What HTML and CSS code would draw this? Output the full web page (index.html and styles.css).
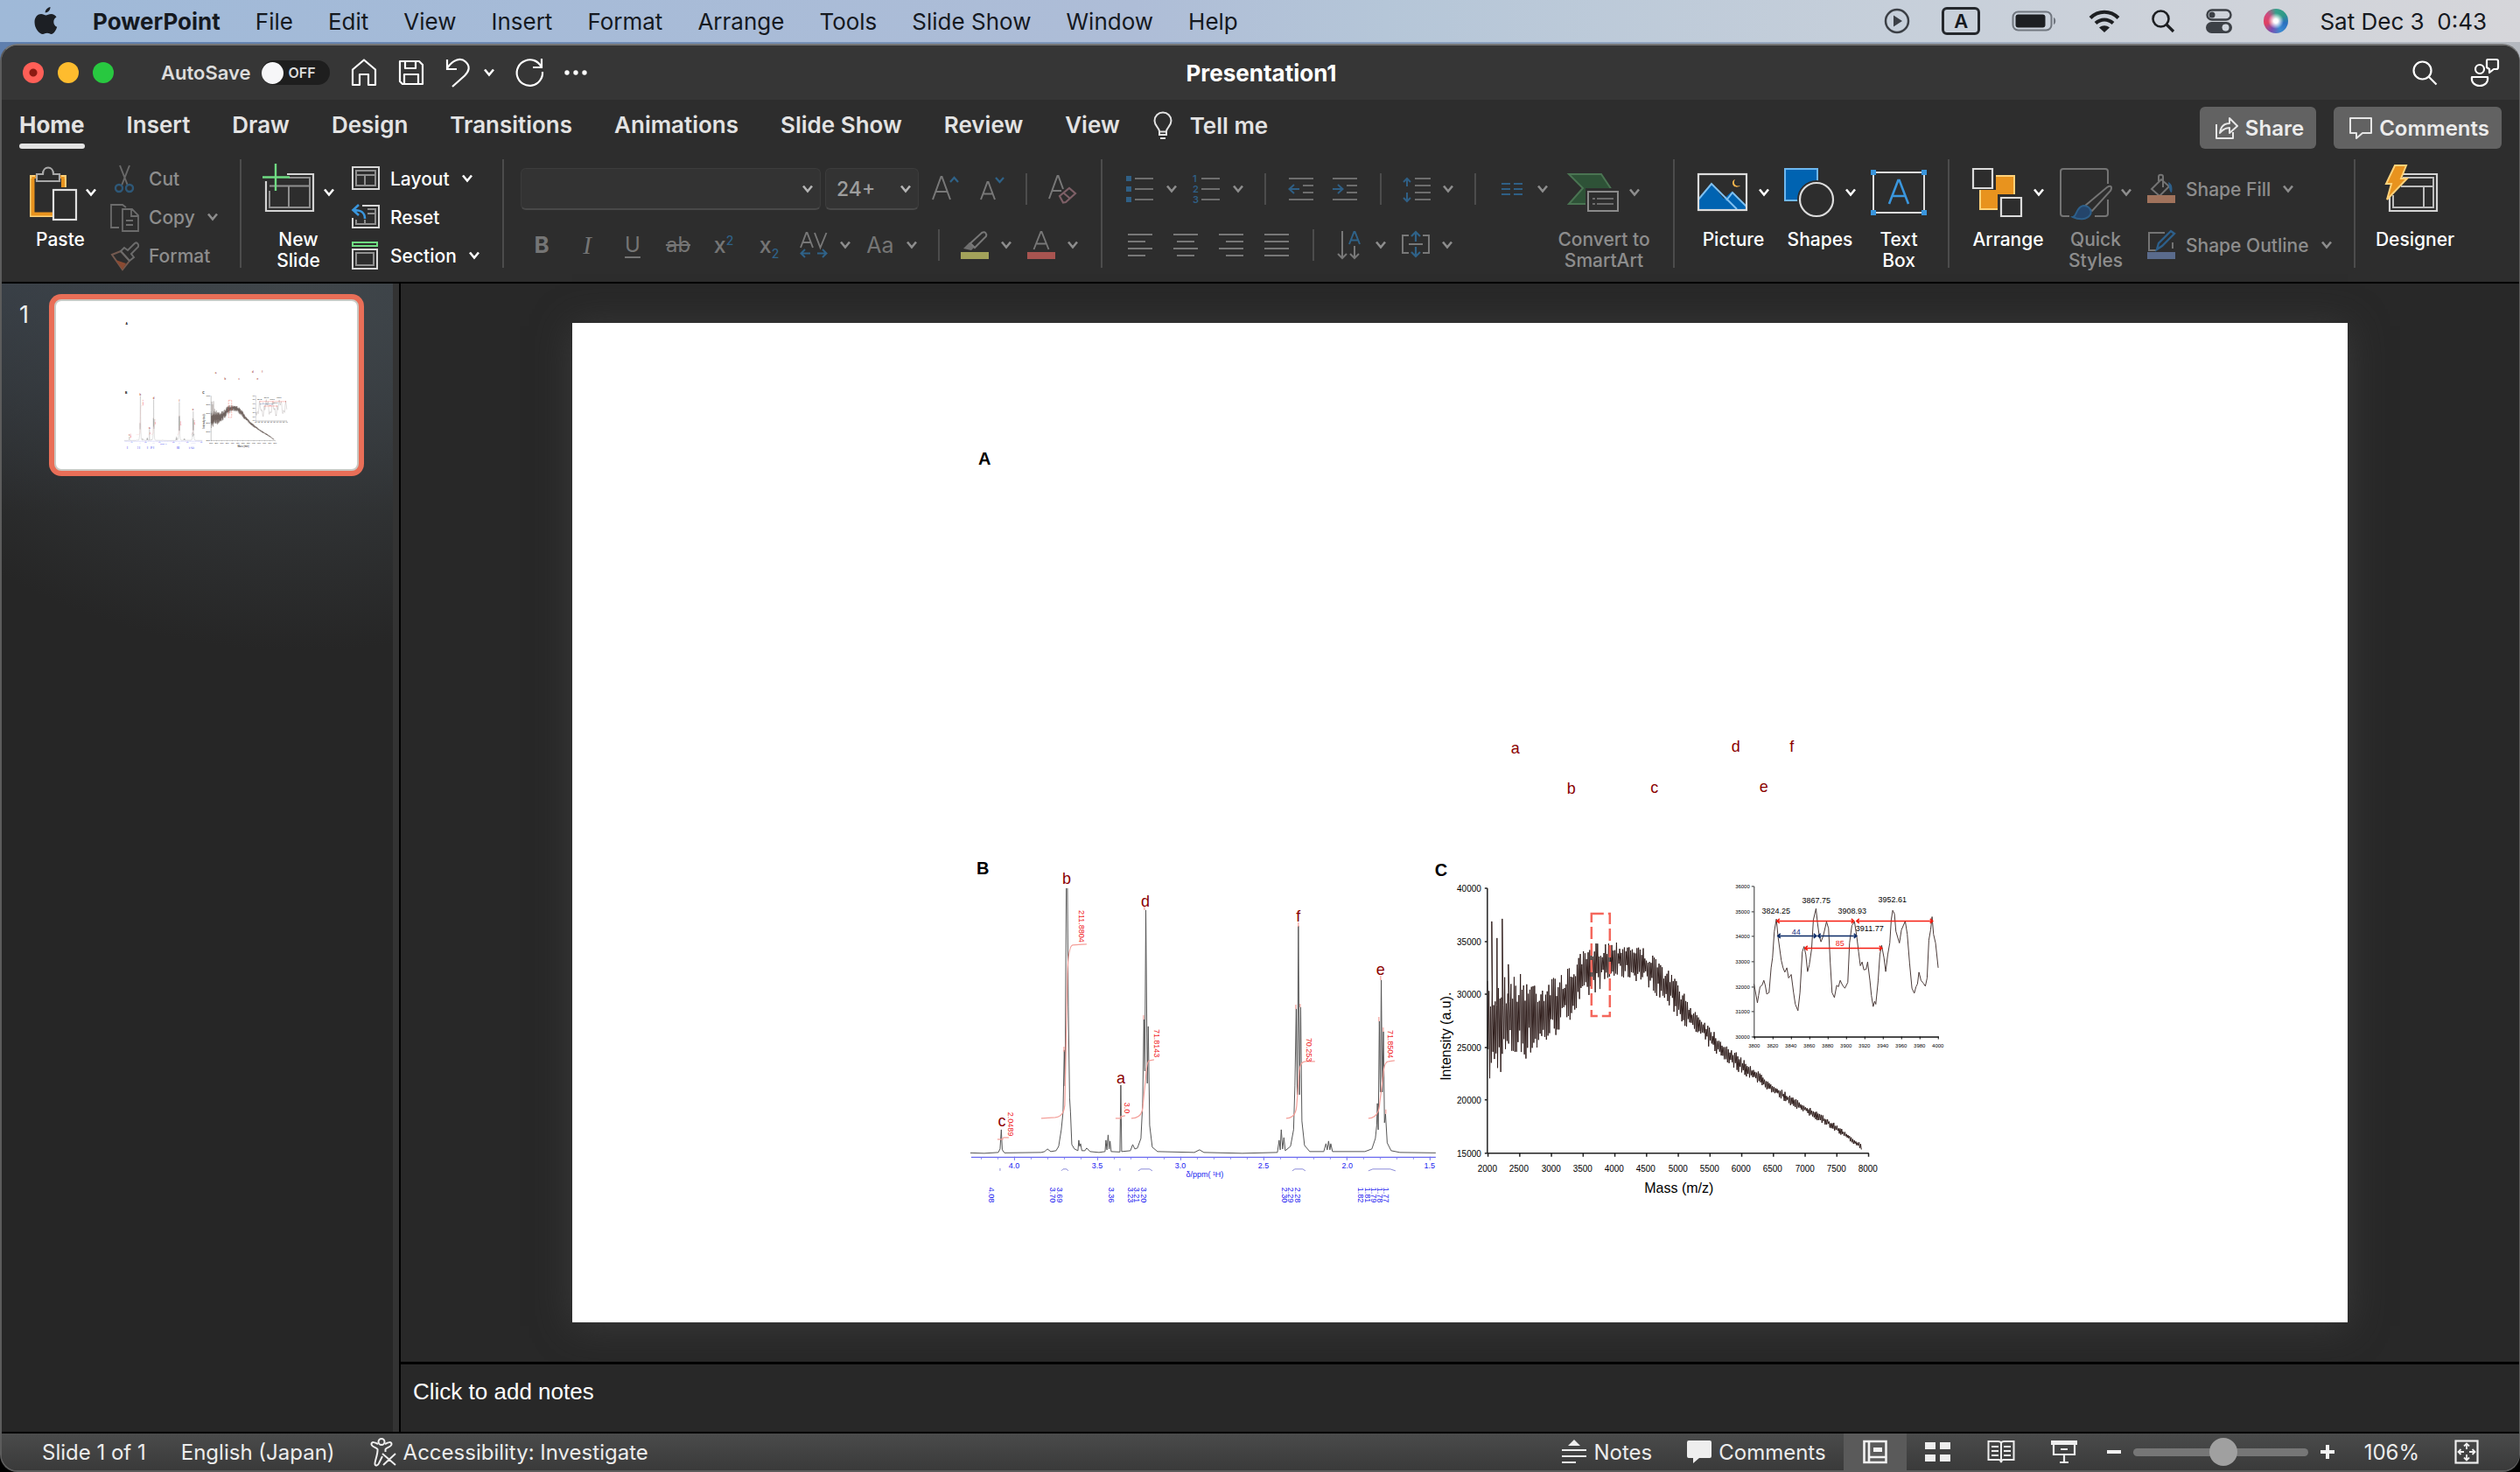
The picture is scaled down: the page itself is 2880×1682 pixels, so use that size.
FILE: index.html
```html
<!DOCTYPE html>
<html lang="en">
<head>
<meta charset="utf-8">
<title>Presentation1</title>
<link rel="stylesheet" href="styles.css">
</head>
<body>
<svg class="defs" aria-hidden="true">
  <symbol id="chev" viewBox="0 0 12 10"><path d="M1 1.5 6 7.5 11 1.5" fill="none" stroke="currentColor" stroke-width="2.6"/></symbol>
</svg>

<header class="menubar">
  <nav class="menus">
    <a href="#" aria-label="Apple"><svg width="28" height="34" viewBox="0 0 28 34"><path fill="#1c1f24" d="M19.500 1c.2 3-2.600 6.500-5.800 6.500C13.400 4.500 16.500 1.300 19.500 1zM26.500 12.500c-2 1.300-3.200 3-3.200 5.400 0 2.700 1.500 4.900 3.900 5.900-1 3.200-3.600 8.200-6.400 8.200-2 0-2.600-1.200-4.900-1.200-2.400 0-3.100 1.200-5 1.200C6.800 32 1.500 25.500 1.500 18.300c0-6.200 3.900-9.300 7.500-9.300 2.300 0 4.100 1.500 5.500 1.500 1.300 0 3.400-1.600 6.100-1.600 2.300 0 4.600 1.200 5.900 3.600z"/></svg></a>
    <a href="#" class="app">PowerPoint</a>
    <a href="#">File</a><a href="#">Edit</a><a href="#">View</a><a href="#">Insert</a><a href="#">Format</a><a href="#">Arrange</a><a href="#">Tools</a><a href="#">Slide Show</a><a href="#">Window</a><a href="#">Help</a>
  </nav>
  <div class="extras">
    <svg width="30" height="30" viewBox="0 0 30 30"><circle cx="15" cy="15" r="13" fill="none" stroke="#3c4046" stroke-width="2.500"/><path d="M11 8.500v13L21 15z" fill="#3c4046"/></svg>
    <span class="input-source">A</span>
    <svg width="52" height="24" viewBox="0 0 52 24"><rect x="1.500" y="1.500" width="44" height="21" rx="6" fill="none" stroke="#70767e" stroke-width="2"/><rect x="4.500" y="4.500" width="34" height="15" rx="3" fill="#1d1f22"/><path d="M48 8v8c3-1 3-7 0-8z" fill="#70767e"/></svg>
    <svg width="36" height="26" viewBox="0 0 36 26"><path d="M2 9.500c9-9 23-9 32 0M8 15.500c6-5.500 14-5.500 20 0" fill="none" stroke="#1d1f22" stroke-width="4"/><path d="M12 20.500c4-3 8-3 12 0L18 26z" fill="#1d1f22"/></svg>
    <svg width="26" height="26" viewBox="0 0 26 26"><circle cx="10.500" cy="10.500" r="9" fill="none" stroke="#1d1f22" stroke-width="2.600"/><path d="m17 17 8 8" stroke="#1d1f22" stroke-width="3.200"/></svg>
    <svg width="30" height="28" viewBox="0 0 30 28"><rect x="1.500" y="1.500" width="27" height="11" rx="5.500" fill="none" stroke="#3c4046" stroke-width="2.400"/><circle cx="7" cy="7" r="3.500" fill="#3c4046"/><rect y="15" width="30" height="13" rx="6.500" fill="#3c4046"/><circle cx="22.500" cy="21.500" r="4" fill="#cfd5dd"/></svg>
    <span class="siri"></span>
    <time>Sat Dec 3&nbsp; 0:43</time>
  </div>
</header>

<main class="window">
  <div class="titlebar">
    <div class="quick">
      <div class="lights"><button class="light red" aria-label="Close"></button><button class="light yellow" aria-label="Minimise"></button><button class="light green" aria-label="Zoom"></button></div>
      <label class="autosave">AutoSave <span class="toggle"><input type="checkbox" role="switch"><span>OFF</span></span></label>
      <div class="quick-tools">
        <button aria-label="Home"><svg width="30" height="32" viewBox="0 0 30 32"><path d="M2 12.500 15 1.500l13 11V30h-8V18h-10v12H2z" fill="none" stroke="#fff" stroke-width="2.200" stroke-linejoin="round"/></svg></button>
        <button aria-label="Save"><svg width="30" height="32" viewBox="0 0 30 32"><path d="M2 3h22l4 4v22H5l-3-3zM8 3v8h12V3M7 29V18h16v11" fill="none" stroke="#fff" stroke-width="2.200" stroke-linejoin="round"/></svg></button>
        <button class="undo" aria-label="Undo"><svg width="28" height="34" viewBox="0 0 28 34"><path d="M2 2v11h11M2 12C8 3 17-1 23 4.500s4 11-1 16L8 33" fill="none" stroke="#fff" stroke-width="2.200"/></svg><svg class="chev"><use href="#chev"/></svg></button>
        <button aria-label="Redo"><svg width="32" height="34" viewBox="0 0 32 34"><path d="M30 1v10H20M30 11C26 3 18 .500 11 3.500A14.700 14.700 0 1 0 31 16" fill="none" stroke="#fff" stroke-width="2.200"/></svg></button>
        <button aria-label="More"><svg width="26" height="6" viewBox="0 0 26 6"><circle cx="3" cy="3" r="2.700" fill="#fff"/><circle cx="13" cy="3" r="2.700" fill="#fff"/><circle cx="23" cy="3" r="2.700" fill="#fff"/></svg></button>
      </div>
    </div>
    <h1>Presentation1</h1>
    <div class="title-right">
      <button aria-label="Search"><svg width="28" height="28" viewBox="0 0 28 28"><circle cx="11.500" cy="11.500" r="10" fill="none" stroke="#fff" stroke-width="2.200"/><path d="m18.500 18.500 9 9" stroke="#fff" stroke-width="2.200"/></svg></button>
      <button aria-label="Presence"><svg width="34" height="34" viewBox="0 0 34 34"><g fill="none" stroke="#fff" stroke-width="2.200" stroke-linejoin="round"><circle cx="11" cy="13" r="5"/><path d="M2 22h18c1 6-3 10-9 10S1 28 2 22zM20 2h10q2 0 2 2v7q0 2-2 2h-3l-5 4v-4l-3-2V4q0-2 1-2z"/></g></svg></button>
    </div>
  </div>

  <div class="tabbar">
    <nav class="tabs">
      <button class="active">Home</button><button>Insert</button><button>Draw</button><button>Design</button><button>Transitions</button><button>Animations</button><button>Slide Show</button><button>Review</button><button>View</button>
      <button class="tellme"><svg width="22" height="32" viewBox="0 0 22 32"><path d="M7 22c0-4-5.500-6-5.500-12a9.500 9.500 0 0 1 19 0c0 6-5.500 8-5.500 12v4H7zM7 22.500h8M8 30h6" fill="none" stroke="#e3e3e3" stroke-width="2"/></svg>Tell me</button>
    </nav>
    <div class="actions">
      <button><svg width="26" height="26" viewBox="0 0 26 26"><path d="M1 9v16h19v-7M5 19C6 11 10 8 16 8V2l9 9-9 8v-6c-5 0-8 2-11 6z" fill="none" stroke="#e6e6e6" stroke-width="2" stroke-linejoin="round"/></svg>Share</button>
      <button><svg width="26" height="26" viewBox="0 0 26 26"><path d="M1 2h24v17H15l-7 6v-6H1z" fill="none" stroke="#e6e6e6" stroke-width="2" stroke-linejoin="round"/></svg>Comments</button>
    </div>
  </div>

  <div class="ribbon">
    <section class="group clipboard">
      <button class="big"><span><svg width="58" height="64" viewBox="0 0 58 64"><path d="M6 12h41v14h-5V16H10v41h22v2.500H6z" fill="#e8931e"/><path d="M12 13H7.200v46H32M42 13h4.800v13" fill="none" stroke="#ffd27a" stroke-width="2.200"/><path d="M9.500 16v40.500H32M44 16v10" fill="none" stroke="#e8931e" stroke-width="4"/><path d="M14 19v-8h7c0-10 12-10 12 0h7v8z" fill="#2d2d2d" stroke="#a9a9a9" stroke-width="2.200"/><rect x="33" y="29" width="26" height="34" fill="#2d2d2d" stroke="#e0e0e0" stroke-width="2.200"/></svg><svg class="chev"><use href="#chev"/></svg></span>Paste</button>
      <div class="stack dim">
        <button><svg width="34" height="34" viewBox="0 0 34 34"><path d="M11 2l9 23M22 2l-9 23" fill="none" stroke="#686868" stroke-width="2"/><circle cx="10" cy="28" r="4" fill="none" stroke="#2e5878" stroke-width="2.400"/><circle cx="22" cy="28" r="4" fill="none" stroke="#2e5878" stroke-width="2.400"/></svg>Cut</button>
        <button><svg width="34" height="34" viewBox="0 0 34 34"><path d="M10 29H1V3h13l4 3M14 8h11l7 7v18H14zM24 8v8h8M18 21h8M18 26h8" fill="none" stroke="#6c6c6c" stroke-width="1.800"/></svg>Copy<svg class="chev"><use href="#chev"/></svg></button>
        <button><svg width="34" height="34" viewBox="0 0 34 34"><path d="M2 16l10-4 10 11-8 10z" fill="none" stroke="#735a50" stroke-width="2"/><path d="M6 22l12 4-4 7z" fill="#8a4a32"/><path d="M12 12l4-4 4 3 8-8c3-2 5 2 4 4l-8 8 3 4-5 4z" fill="none" stroke="#6c6c6c" stroke-width="2"/></svg>Format</button>
      </div>
    </section>

    <section class="group slides">
      <button class="big"><span><svg width="58" height="64" viewBox="0 0 58 64"><g fill="none"><path d="M28 11h30v42H4V19" stroke="#d4d4d4" stroke-width="2.200"/><path d="M30 15h24v34H8V30M8 24.500h46M30 25v24" stroke="#8f8f8f" stroke-width="2"/><path d="M15-1v31M0 14.500h31" stroke="#6fdc82" stroke-width="2.400"/></g></svg><svg class="chev"><use href="#chev"/></svg></span>New<br>Slide</button>
      <div class="stack">
        <button><svg width="34" height="34" viewBox="0 0 34 34"><rect x="1" y="4" width="30" height="25" fill="none" stroke="#d8d8d8" stroke-width="2"/><path d="M5 8h22v17H5zM5 13h22M15 13v12" fill="none" stroke="#8f8f8f" stroke-width="2"/></svg>Layout<svg class="chev"><use href="#chev"/></svg></button>
        <button><svg width="34" height="34" viewBox="0 0 34 34"><path d="M1 18v11h30V4H12" fill="none" stroke="#d8d8d8" stroke-width="2"/><path d="M5 20v5h22V8H18M18 13h9M15 20v5" fill="none" stroke="#8f8f8f" stroke-width="2"/><path d="M8 3 1.500 9 8 15M2 9c8 0 13 2 13 10" fill="none" stroke="#3a96dd" stroke-width="2.600"/></svg>Reset</button>
        <button><svg width="34" height="34" viewBox="0 0 34 34"><rect x="1" y="2" width="28" height="4" fill="none" stroke="#6fdc82" stroke-width="2"/><rect x="1" y="10" width="28" height="22" fill="none" stroke="#d8d8d8" stroke-width="2"/><rect x="5" y="14" width="20" height="14" fill="none" stroke="#8f8f8f" stroke-width="2"/></svg>Section<svg class="chev"><use href="#chev"/></svg></button>
      </div>
    </section>

    <section class="group rows font">
      <div class="row">
        <label class="combo name"><select aria-label="Font"><option></option></select><svg class="chev"><use href="#chev"/></svg></label>
        <label class="combo size"><select aria-label="Font size"><option>24+</option></select><svg class="chev"><use href="#chev"/></svg></label>
        <div class="tools">
          <button aria-label="Grow font"><svg width="32" height="32" viewBox="0 0 32 32"><path d="M2 28 11.500 2h1L22 28M5.500 19h13" fill="none" stroke="#787878" stroke-width="2"/><path d="m22 8 4.500-5L31 8" fill="none" stroke="#2f6288" stroke-width="2.200"/></svg></button>
          <button aria-label="Shrink font"><svg width="28" height="32" viewBox="0 0 28 32"><path d="M1 28 8.500 8h1L17 28M4 21.500h10" fill="none" stroke="#787878" stroke-width="2"/><path d="m18 3 4.500 5L27 3" fill="none" stroke="#2f6288" stroke-width="2.200"/></svg></button>
          <i class="sep"></i>
          <button aria-label="Clear formatting"><svg width="32" height="34" viewBox="0 0 32 34"><path d="M1 28 10.500 2h1L17 17M4 19h11" fill="none" stroke="#787878" stroke-width="2"/><path d="m13 25 11-9 7 6-11 10-3 .500zM17 21l7 6" fill="none" stroke="#7d5f66" stroke-width="2.200"/></svg></button>
        </div>
      </div>
      <div class="row second">
        <button class="cell b">B</button><button class="cell i">I</button><button class="cell u">U</button><button class="cell s">ab</button><button class="cell x">x<sup>2</sup></button><button class="cell x">x<sub>2</sub></button>
        <div class="tools tight">
          <button class="split" aria-label="Character spacing"><svg width="32" height="32" viewBox="0 0 32 32"><path d="M1 19 7.500 2h1L15 19M3 13h10M17 2l6.500 17L30.500 2" fill="none" stroke="#787878" stroke-width="1.900"/><path d="M6 21l-4.500 4.500L6 30M1 25.500h11M26 21l4.500 4.500L26 30M31 25.500H20" fill="none" stroke="#2f6288" stroke-width="2"/></svg><svg class="chev"><use href="#chev"/></svg></button>
          <button class="split" aria-label="Change case"><span class="case">Aa</span><svg class="chev"><use href="#chev"/></svg></button>
          <i class="sep"></i>
          <button class="split" aria-label="Highlight"><svg width="32" height="32" viewBox="0 0 32 32"><path d="M3 20l7-7 6 5-4 4z" fill="#6e6e6e"/><path d="M11 14 24 2c4-2 6 1 5 4L16 19z" fill="none" stroke="#787878" stroke-width="2"/><path d="M0 24h32v8H0z" fill="#a3a25a"/></svg><svg class="chev"><use href="#chev"/></svg></button>
          <button class="split" aria-label="Font color"><svg width="32" height="32" viewBox="0 0 32 32"><path d="M7.500 21 15.500 1h1l8 20M11 14.500h10" fill="none" stroke="#787878" stroke-width="1.900"/><path d="M0 24h32v8H0z" fill="#a85450"/></svg><svg class="chev"><use href="#chev"/></svg></button>
        </div>
      </div>
    </section>

    <section class="group para">
      <div class="rows">
        <div class="row inset">
          <div class="tools tight">
            <button class="split" aria-label="Bullets"><svg width="32" height="32" viewBox="0 0 32 32"><path d="M0 1h6v6H0zM0 13h6v6H0zM0 25h6v6H0z" fill="#2f5f85"/><path d="M10 4h21M10 16h21M10 28h21" stroke="#6e6e6e" stroke-width="2"/></svg><svg class="chev"><use href="#chev"/></svg></button>
            <button class="split" aria-label="Numbering"><svg width="32" height="32" viewBox="0 0 32 32"><g fill="#2f5f85" font-family="Inter" font-size="11" font-weight="600"><text y="8">1</text><text y="20">2</text><text y="32">3</text></g><path d="M10 4h21M10 16h21M10 28h21" stroke="#6e6e6e" stroke-width="2"/></svg><svg class="chev"><use href="#chev"/></svg></button>
            <i class="sep"></i>
            <button aria-label="Outdent"><svg width="32" height="32" viewBox="0 0 32 32"><path d="M2 4h28M18 12h12M18 20h12M2 28h28" stroke="#6e6e6e" stroke-width="2"/><path d="M8 11l-5.500 5L8 21M2 16h12" fill="none" stroke="#2f5f85" stroke-width="2"/></svg></button>
            <button aria-label="Indent"><svg width="32" height="32" viewBox="0 0 32 32"><path d="M2 4h28M18 12h12M18 20h12M2 28h28" stroke="#6e6e6e" stroke-width="2"/><path d="M8 11l5.500 5L8 21M2 16h12" fill="none" stroke="#2f5f85" stroke-width="2"/></svg></button>
            <i class="sep"></i>
            <button class="split" aria-label="Line spacing"><svg width="32" height="32" viewBox="0 0 32 32"><path d="M14 4h18M14 12h18M14 20h18M14 28h18" stroke="#6e6e6e" stroke-width="2"/><path d="M5 4v9M5 20v10M1 8l4-4 4 4M1 26l4 4 4-4" fill="none" stroke="#2f5f85" stroke-width="2"/></svg><svg class="chev"><use href="#chev"/></svg></button>
            <i class="sep"></i>
            <button class="split" aria-label="Columns"><svg width="32" height="32" viewBox="0 0 32 32"><path d="M5 10h10M19 10h10M5 16h10M19 16h10M5 22h10M19 22h10" stroke="#2f5f85" stroke-width="2"/></svg><svg class="chev"><use href="#chev"/></svg></button>
          </div>
        </div>
        <div class="row second">
          <button class="cell" aria-label="Align left"><svg width="28" height="28" viewBox="0 0 28 28"><path d="M0 2h28M0 10h20M0 18h28M0 26h20" stroke="#787878" stroke-width="2"/></svg></button>
          <button class="cell" aria-label="Center"><svg width="28" height="28" viewBox="0 0 28 28"><path d="M0 2h28M4 10h20M0 18h28M4 26h20" stroke="#787878" stroke-width="2"/></svg></button>
          <button class="cell" aria-label="Align right"><svg width="28" height="28" viewBox="0 0 28 28"><path d="M0 2h28M8 10h20M0 18h28M8 26h20" stroke="#787878" stroke-width="2"/></svg></button>
          <button class="cell" aria-label="Justify"><svg width="28" height="28" viewBox="0 0 28 28"><path d="M0 2h28M0 10h28M0 18h28M0 26h28" stroke="#787878" stroke-width="2"/></svg></button>
          <div class="tools tight">
            <i class="sep"></i>
            <button class="split" aria-label="Text direction"><svg width="32" height="32" viewBox="0 0 32 32"><path d="M8 0v30M3 26l5 5 5-5M22 17v13M17 26l5 5 5-5" fill="none" stroke="#787878" stroke-width="2"/><path d="M16 15 21.500 1h1L28 15M18 10.500h8" fill="none" stroke="#2f6288" stroke-width="2"/></svg><svg class="chev"><use href="#chev"/></svg></button>
            <button class="split" aria-label="Align text"><svg width="32" height="32" viewBox="0 0 32 32"><path d="M8 5H1v20h7M24 5h7v20h-7M8 15h16" fill="none" stroke="#787878" stroke-width="2"/><path d="M16 1v11M16 18v11M11 6l5-5 5 5M11 24l5 5 5-5" fill="none" stroke="#2f6288" stroke-width="2.200"/></svg><svg class="chev"><use href="#chev"/></svg></button>
          </div>
        </div>
      </div>
      <button class="big dim"><span><svg width="58" height="64" viewBox="0 0 58 64"><path d="M1 11h37l16 24-6 10H1l16-18z" fill="#2e5237" stroke="#4a7452" stroke-width="2"/><path d="M20 27h40v36H20z" fill="#2d2d2d"/><path d="M23 31h34v22H23z" fill="#2d2d2d" stroke="#8a8a8a" stroke-width="2"/><path d="M28 39h3M28 45h3M33 39h19M33 45h19" stroke="#6c6c6c" stroke-width="2"/></svg><svg class="chev"><use href="#chev"/></svg></span>Convert to<br>SmartArt</button>
    </section>

    <section class="group insert">
      <button class="big"><span><svg width="58" height="64" viewBox="0 0 58 64"><rect x="1" y="11" width="55" height="41" fill="#2d2d2d"/><path d="M1 40 16 22l14 17 9-8 17 16v5H1z" fill="#0063b1"/><path d="M1 40 16 22l29 29M33 41l7-9 16 16" fill="none" stroke="#7fc0f0" stroke-width="2"/><rect x="1" y="11" width="55" height="41" fill="none" stroke="#dcdcdc" stroke-width="2.200"/><path d="M43 17c-3 4 0 9 6 7-3 3-9 2-9-3 0-2 1-3.500 3-4z" fill="#ffb84d"/></svg><svg class="chev"><use href="#chev"/></svg></span>Picture</button>
      <button class="big"><span><svg width="58" height="64" viewBox="0 0 58 64"><rect x="1" y="5" width="37" height="36" fill="#0063b1" stroke="#6db7f0" stroke-width="2"/><circle cx="37" cy="40" r="22" fill="#2d2d2d"/><circle cx="37" cy="40" r="19" fill="none" stroke="#dcdcdc" stroke-width="2.200"/></svg><svg class="chev"><use href="#chev"/></svg></span>Shapes</button>
      <button class="big single"><span><svg width="64" height="64" viewBox="0 0 64 64"><path d="M3 9h58v46H3z" fill="none" stroke="#dcdcdc" stroke-width="2"/><path d="M0 6h6v6H0zM58 6h6v6h-6zM0 52h6v6H0zM58 52h6v6h-6z" fill="#3a96dd"/><path d="M21 45 31.300 18h1.400L43 45M25 36h14" fill="none" stroke="#3a96dd" stroke-width="2.600"/></svg></span>Text<br>Box</button>
    </section>

    <section class="group drawing">
      <button class="big"><span><svg width="58" height="64" viewBox="0 0 58 64"><path d="M9 13h39v38H9z" fill="#e8931e" stroke="#ffd27a" stroke-width="2"/><path d="M-1 3h28v26H-1zM29 34h29v28H29z" fill="#2d2d2d"/><path d="M1 5h22v22H1zM33 38h23v21H33z" fill="#2d2d2d" stroke="#dcdcdc" stroke-width="2.200"/></svg><svg class="chev"><use href="#chev"/></svg></span>Arrange</button>
      <button class="big dim"><span><svg width="58" height="64" viewBox="0 0 58 64"><path d="M11 59H4q-3 0-3-3V8q0-3 3-3h48q3 0 3 3v14M55 40v16q0 3-3 3H40" fill="none" stroke="#747474" stroke-width="2"/><path d="M29 47 54 26c5-3 6 0 4 4L37 53z" fill="#2d2d2d" stroke="#747474" stroke-width="2"/><path d="M15 60c5-1 3-11 12-13 7 0 10 6 8 10-4 7-14 6-20 3z" fill="#24456b" stroke="#2d5f8a" stroke-width="2"/></svg><svg class="chev"><use href="#chev"/></svg></span>Quick<br>Styles</button>
      <div class="stack wide dim">
        <button><svg width="34" height="34" viewBox="0 0 34 34"><path d="M16 6 5 17l9 8 11-11zM13 8V3c0-3 5-3 5 0v12" fill="none" stroke="#747474" stroke-width="2"/><path d="M24 9c5 2 5 8 4 12-3 0-3-7-4-12z" fill="#2d5f8a"/><path d="M0 24h32v9H0z" fill="#a1735c"/></svg>Shape Fill<svg class="chev"><use href="#chev"/></svg></button>
        <button><svg width="34" height="34" viewBox="0 0 34 34"><path d="M20 3H2v20h8M29 14v7" fill="none" stroke="#747474" stroke-width="2"/><path d="M11 22l2-7L27 1l4 3-14 14z" fill="none" stroke="#2d5f8a" stroke-width="2.400"/><path d="M0 25h32v8H0z" fill="#5a6b8c"/></svg>Shape Outline<svg class="chev"><use href="#chev"/></svg></button>
      </div>
    </section>

    <section class="group designer">
      <button class="big"><span><svg width="60" height="64" viewBox="0 0 60 64"><path d="M14 11h41v42H1V35" fill="none" stroke="#d4d4d4" stroke-width="2.200"/><path d="M16 15h35v34H5V35M14 25h37M40 25v24" fill="none" stroke="#bdbdbd" stroke-width="2"/><path d="M7 1h13l-6 15h7L-2 40l5-18h-6z" fill="#e8931e" stroke="#ffd27a" stroke-width="2"/></svg></span>Designer</button>
    </section>
  </div>

  <div class="body">
    <aside class="sidebar">
      <span class="num">1</span>
      <button class="thumb" aria-label="Slide 1"><svg viewBox="654 368 2030 1143"><use href="#figure"/></svg></button>
    </aside>
    <div class="stage">
      <div class="canvas">
        <svg class="slide" viewBox="654 368 2030 1143">
          <g id="figure" font-family="'Liberation Sans', Arial, sans-serif">
            <g font-size="20" font-weight="700"><text x="1118" y="530">A</text><text x="1116" y="998">B</text><text x="1640" y="1000">C</text></g>
            <g font-size="18" fill="#8b0000" text-anchor="middle">
              <text x="1732" y="860">a</text><text x="1796" y="906">b</text><text x="1891" y="905">c</text><text x="1984" y="858">d</text><text x="2016" y="904">e</text><text x="2048" y="858">f</text>
              <text x="1219" y="1009">b</text><text x="1309" y="1035">d</text><text x="1484" y="1052">f</text><text x="1578" y="1113">e</text><text x="1281" y="1237">a</text><text x="1145" y="1286">c</text>
            </g>
            <path fill="none" stroke="#555" stroke-width="1" stroke-linejoin="round" d="M1109 1316.500 1125 1317 1141 1316 1143 1312 1144.400 1290 1145.500 1313 1148 1316.500 1190 1316 1194 1315 1197 1312 1201 1315 1207 1314 1210 1309 1213 1290 1215 1270 1216.400 1199 1217.300 1240 1218.700 1014M1220 1014 1221 1150 1222.500 1254 1223.500 1270 1225 1307 1228 1312 1232 1314 1233 1302 1234 1309 1235 1306 1236.500 1314 1240 1314 1242 1311 1246 1315 1256 1316 1263 1315 1264 1302 1265.200 1313 1266.500 1296 1267.700 1312 1268.700 1303 1270 1315 1280 1315.500 1281 1239 1282 1315 1292 1314 1294.600 1307 1297 1312 1300 1311 1304 1300 1306 1260 1307.400 1164 1308.500 1223 1309.600 1039 1311.300 1237 1312.400 1172 1314 1285 1317 1310 1323 1315 1365 1316 1371 1313 1376 1316 1420 1317 1460 1316 1462 1302 1463.200 1313 1464.400 1290 1466 1312 1467.400 1299 1469 1314 1475 1309 1478.500 1290 1480 1240 1481.500 1152 1482.700 1250 1484 1057 1485.300 1250 1486.600 1150 1488 1280 1491 1308 1497 1315 1513 1315 1515.500 1306 1517 1313 1518.500 1303 1520 1313 1521 1306 1523 1315 1560 1315 1568 1312 1572 1300 1573.500 1285 1574.300 1260 1575.300 1290 1576.500 1166 1577.700 1247 1578.700 1119 1579.900 1247 1581.200 1178 1582.400 1282 1583.600 1272 1585.500 1305 1590 1314 1600 1316 1641 1316.500"/>
            <path fill="none" stroke="#f4a09a" stroke-width="1.200" d="M1140 1301h6q0-2 1-2h6M1190 1277l16-1q10-1 11-14l3-150q1-32 6-33l7-.500 9-.500M1275 1277h6v-2l5-1M1293 1277q12 0 13-12l4-40q1-14 4-14l5-1M1470 1277q11 0 12-14l3-40q1-11 7-11h11M1564 1277q12 0 13-18l4-32q1-15 6-15l7-1M1216 1195v6M1307 1159v5M1308 1035v4M1484 1053v5M1481 1147v5M1486 1146v4M1578 1114v5M1576 1161v5M1581 1173v5M1584 1267v5"/>
            <path stroke="#6a6af0" stroke-width="1.200" fill="none" d="M1110 1321.500h531"/>
            <path stroke="#6a6af0" stroke-width="4" fill="none" stroke-dasharray="1 94" d="M1159 1323h480"/>
            <path stroke="#8a8af0" stroke-width="2" fill="none" stroke-dasharray="1 18" d="M1121 1323h520"/>
            <path stroke="#8a8ad8" fill="none" d="M1143 1376"/>
            <path stroke="#8a8ad8" fill="none" d="M1143 1376M1143 1334v3M1213 1379M1213 1378M1213 1337l2-2h4l2 2M1280 1334v3M1301 1337l3-2h10l3 2M1477 1337l3-2h9l3 2M1564 1337l5-2h20l6 2"/>
            <g font-size="9" fill="#1a1af0" text-anchor="middle">
              <text x="1159" y="1334">4.0</text><text x="1254" y="1334">3.5</text><text x="1349" y="1334">3.0</text><text x="1444" y="1334">2.5</text><text x="1540" y="1334">2.0</text><text x="1634" y="1334">1.5</text>
              <text x="1377" y="1344">δ/ppm( ¹H)</text>
            </g>
            <g font-size="9" fill="#1a1af0">
              <text transform="translate(1130 1356) rotate(90)">4.08</text><text transform="translate(1200 1356) rotate(90)">3.70</text><text transform="translate(1208 1356) rotate(90)">3.69</text><text transform="translate(1267 1356) rotate(90)">3.36</text><text transform="translate(1289 1356) rotate(90)">3.23</text><text transform="translate(1296 1356) rotate(90)">3.21</text><text transform="translate(1304 1356) rotate(90)">3.20</text><text transform="translate(1465 1356) rotate(90)">2.30</text><text transform="translate(1472 1356) rotate(90)">2.29</text><text transform="translate(1480 1356) rotate(90)">2.28</text><text transform="translate(1552 1356) rotate(90)">1.82</text><text transform="translate(1560 1356) rotate(90)">1.81</text><text transform="translate(1567 1356) rotate(90)">1.79</text><text transform="translate(1574 1356) rotate(90)">1.78</text><text transform="translate(1581 1356) rotate(90)">1.77</text>
            </g>
            <g font-size="9" fill="#f02020">
              <text transform="translate(1233 1039) rotate(90)">211.8804</text><text transform="translate(1319 1175) rotate(90)">71.8143</text><text transform="translate(1493 1185) rotate(90)">70.253</text><text transform="translate(1586 1176) rotate(90)">71.8504</text><text transform="translate(1285 1259) rotate(90)">3.0</text><text transform="translate(1152 1270) rotate(90)">2.0489</text>
            </g>

            <path id="spectrum" fill="none" stroke="#2e1c1a" stroke-width="1" stroke-linejoin="round"/>
            <path fill="none" stroke="#222" stroke-width="1.500" d="M1700 1014v303h436M1697 1014h3M1697 1075h3M1697 1135h3M1697 1196h3M1697 1256h3M1697 1317h3"/>
            <path fill="none" stroke="#222" stroke-width="4" stroke-dasharray="1.500 34.750" d="M1700 1319h437"/>
            <g font-size="10" text-anchor="end">
              <text x="1693" y="1018">40000</text><text x="1693" y="1079">35000</text><text x="1693" y="1139">30000</text><text x="1693" y="1200">25000</text><text x="1693" y="1260">20000</text><text x="1693" y="1321">15000</text>
            </g>
            <g font-size="10" text-anchor="middle">
              <text x="1700" y="1338">2000</text><text x="1736" y="1338">2500</text><text x="1773" y="1338">3000</text><text x="1809" y="1338">3500</text><text x="1845" y="1338">4000</text><text x="1881" y="1338">4500</text><text x="1918" y="1338">5000</text><text x="1954" y="1338">5500</text><text x="1990" y="1338">6000</text><text x="2026" y="1338">6500</text><text x="2063" y="1338">7000</text><text x="2099" y="1338">7500</text><text x="2135" y="1338">8000</text>
            </g>
            <text font-size="16" transform="translate(1658 1234) rotate(-90)">Intensity (a.u).</text>
            <text font-size="16" x="1919" y="1362" text-anchor="middle">Mass (m/z)</text>
            <rect x="1819" y="1043" width="21" height="117" fill="none" stroke="#f4675c" stroke-width="2.500" stroke-dasharray="14 5"/>

            <path fill="none" stroke="#4a3a38" stroke-width="3" stroke-linejoin="round" transform="translate(1960 990) scale(.3333)" d="M134 400 138 420 146 465 150 440 155 410 162 405 168 388 173 405 178 435 186 430 193 345 198 310 204 220 211 178 217 240 228 320 234 345 240 360 247 345 253 380 262 368 270 430 276 470 285 492 292 430 300 290 306 272 312 300 318 358 324 335 332 280 338 180 347 142 352 190 358 235 364 256 372 235 383 187 390 210 396 330 402 430 410 447 418 405 424 410 430 388 438 405 446 415 456 395 462 260 470 200 479 187 487 240 493 290 499 338 505 325 511 352 519 350 524 325 532 390 537 440 543 478 548 460 552 470 560 390 566 300 572 268 580 310 586 358 593 300 600 260 605 180 610 148 616 160 621 220 633 260 640 215 653 185 660 230 668 330 676 415 684 432 690 410 695 400 700 360 707 388 715 398 722 408 728 380 734 250 740 215 745 170 750 230 757 260 766 345"/>
            <path fill="none" stroke="#555" stroke-width="1.200" d="M2005 1012v172M2002 1012h3M2002 1041h3M2002 1069h3M2002 1098h3M2002 1127h3M2002 1155h3M2002 1184h3"/>
            <path fill="none" stroke="#111" stroke-width="1.500" d="M2004 1184h212"/>
            <path fill="none" stroke="#111" stroke-width="3" stroke-dasharray="1 20" d="M2005 1185h211"/>
            <g font-size="6" text-anchor="end">
              <text x="2000" y="1014">36000</text><text x="2000" y="1043">35000</text><text x="2000" y="1071">34000</text><text x="2000" y="1100">33000</text><text x="2000" y="1129">32000</text><text x="2000" y="1157">31000</text><text x="2000" y="1186">30000</text>
            </g>
            <g font-size="6" text-anchor="middle">
              <text x="2005" y="1196">3800</text><text x="2026" y="1196">3820</text><text x="2047" y="1196">3840</text><text x="2068" y="1196">3860</text><text x="2089" y="1196">3880</text><text x="2110" y="1196">3900</text><text x="2131" y="1196">3920</text><text x="2152" y="1196">3940</text><text x="2173" y="1196">3960</text><text x="2194" y="1196">3980</text><text x="2215" y="1196">4000</text>
            </g>
            <g font-size="9" text-anchor="middle">
              <text x="2030" y="1043">3824.25</text><text x="2076" y="1031">3867.75</text><text x="2117" y="1043">3908.93</text><text x="2163" y="1030">3952.61</text><text x="2137" y="1063">3911.77</text>
              <text x="2053" y="1067" fill="#1a2f80">44</text><text x="2103" y="1080" fill="#f02020">85</text>
            </g>
            <path fill="none" stroke="#f51d12" stroke-width="1.500" d="M2031 1051.500h88M2122 1051.500h87M2063 1082.500h88M2034 1049l-3 2.500 3 2.500M2116 1049l3 2.500-3 2.500M2125 1049l-3 2.500 3 2.500M2206 1049l3 2.500-3 2.500M2066 1080l-3 2.500 3 2.500M2148 1080l3 2.500-3 2.500"/>
            <path fill="none" stroke="#0b2a66" stroke-width="1.500" d="M2032 1068.500h44M2078 1068.500h44M2035 1066l-3 2.500 3 2.500M2073 1066l3 2.500-3 2.500M2081 1066l-3 2.500 3 2.500M2119 1066l3 2.500-3 2.500"/>
          </g>
        </svg>
      </div>
      <textarea class="notes" placeholder="Click to add notes" aria-label="Notes"></textarea>
    </div>
  </div>

  <footer class="status">
    <span>Slide 1 of 1</span>
    <button>English (Japan)</button>
    <button class="a11y"><svg width="30" height="32" viewBox="0 0 30 32"><g fill="none" stroke="#eee" stroke-width="2"><circle cx="13" cy="4.500" r="3.500"/><path d="M9 7C5 5 2 4 1.500 7S7 11 8.500 13C9 19 5 27 5.500 30s4 1 4.500-1l4-8M17 7c4-2 7-3 7.500 0S19 11 17.500 13v3M14 18l15 13M29 18 15 31"/></g></svg>Accessibility: Investigate</button>
    <div class="right">
      <button><svg width="28" height="28" viewBox="0 0 28 28"><path d="M14 0l7 7H7z" fill="#eee"/><path d="M0 12h28M0 19h28M0 26h16" stroke="#eee" stroke-width="2"/></svg>Notes</button>
      <button class="cm"><svg width="28" height="26" viewBox="0 0 28 26"><path d="M2 0h24q2 0 2 2v16q0 2-2 2H14l-7 6v-6H2q-2 0-2-2V2q0-2 2-2z" fill="#eee"/></svg>Comments</button>
      <button class="view on" aria-label="Normal"><svg width="28" height="28" viewBox="0 0 28 28"><path d="M1.500 2h25v24h-25zM7 2v24M8 20h19" fill="none" stroke="#f2f2f2" stroke-width="2.600"/><path d="M12 9h10v5H12z" fill="#f2f2f2"/></svg></button>
      <button class="view" aria-label="Slide sorter"><svg width="32" height="26" viewBox="0 0 32 26"><path d="M1 2h12v8H1zM18 2h12v8H18zM1 16h12v8H1zM18 16h12v8H18z" fill="#eee"/></svg></button>
      <button class="view" aria-label="Reading view"><svg width="32" height="28" viewBox="0 0 32 28"><path d="M1.500 2h11q3 0 3.500 2 .5-2 3.500-2h11v21h-12q-2 0-2.500 3-.5-3-2.500-3h-12zM16 4v20M5 8h8M5 13h8M5 18h8M19 8h8M19 13h8M19 18h8" fill="none" stroke="#eee" stroke-width="2"/></svg></button>
      <button class="view" aria-label="Slide show"><svg width="30" height="26" viewBox="0 0 30 26"><path d="M0 0h30v5H0z" fill="#eee"/><path d="M3 4v12h24V4M15 16v8M10 25h10M11 10h8" fill="none" stroke="#eee" stroke-width="2.200"/></svg></button>
      <button class="minus" aria-label="Zoom out"></button>
      <input type="range" aria-label="Zoom" min="0" max="100" value="52">
      <button class="plus" aria-label="Zoom in"></button>
      <button class="pct">106%</button>
      <button class="fit" aria-label="Fit slide"><svg width="28" height="28" viewBox="0 0 28 28"><rect x="1.500" y="1.500" width="25" height="25" fill="none" stroke="#eee" stroke-width="2.200"/><path d="M14 5v6M14 17v6M5 14h6M17 14h6M11 7.500 14 4.500l3 3M11 20.500l3 3 3-3M7.500 11l-3 3 3 3M20.500 11l3 3-3 3" fill="none" stroke="#eee" stroke-width="1.800"/></svg></button>
    </div>
  </footer>
</main>
<script src="script.js"></script>
</body>
</html>
```
FILE: styles.css
```css
* { box-sizing: border-box; margin: 0; padding: 0; }
body {
  min-height: 100vh; display: flex; flex-direction: column;
  font-family: Inter, "Noto Sans", sans-serif; font-size: 21px; color: #fff;
  background: linear-gradient(to bottom, transparent 100px, #000 200px), linear-gradient(to right, #5f7fae, #8ba0bd 60%, #b5b9bf);
}
.defs { position: absolute; width: 0; height: 0; }
button { border: 0; background: none; color: inherit; font: inherit; white-space: nowrap; }
a { color: inherit; text-decoration: none; }
svg { display: block; flex: none; overflow: visible; }
.chev { width: 12px; height: 10px; }

.menubar {
  height: 48px; padding: 0 38px; display: flex; justify-content: space-between; align-items: center;
  background: linear-gradient(to right, #9fb9d8, #aebdd7 45%, #b5c6d8 55%, #c6cfda 75%, #d6d6da);
  color: #15191f; font-size: 26px;
}
.menus { display: flex; align-items: center; gap: 40px; }
.app { font-weight: 700; }
.extras { display: flex; align-items: center; gap: 36px; }
.input-source { width: 44px; height: 32px; border: 3px solid #24272c; border-radius: 6px; display: grid; place-items: center; font-size: 22px; font-weight: 600; }
.siri { width: 28px; height: 28px; border-radius: 50%; background: radial-gradient(circle at 50% 50%, #fff 0 12%, transparent 45%), conic-gradient(#37a08c, #2e9a86, #2a6fc0, #3a8ad0, #7a4fb0, #e0405f, #d04a80, #37a08c); }
.extras time { white-space: pre; }

.window {
  flex: 1; margin-top: 2px; display: flex; flex-direction: column; overflow: hidden;
  border-radius: 20px; background: #2d2d2d; border: solid #5c5c5c; border-width: 2px 1px 2px 2px; border-top-color: #757575;
}
.titlebar { height: 62px; padding: 0 22px 0 24px; background: #363636; display: grid; grid-template-columns: 1fr auto 1fr; align-items: center; }
.titlebar h1 { font-size: 26px; font-weight: 700; }
.quick, .lights, .quick-tools, .title-right, .autosave { display: flex; align-items: center; }
.lights { gap: 16px; }
.light { width: 24px; height: 24px; border-radius: 50%; }
.red { background: radial-gradient(circle, #8c1a12 0 4px, #ff5f57 5px); }
.yellow { background: #febc2e; }
.green { background: #28c840; }
.autosave { margin-left: 54px; gap: 12px; font-size: 22px; font-weight: 600; color: #dcdcdc; }
.toggle { width: 78px; height: 28px; border-radius: 14px; background: #1e1e1e; display: flex; align-items: center; gap: 6px; font-size: 16px; }
.toggle input { appearance: none; width: 25px; height: 25px; border-radius: 50%; background: #f6f6f8; }
.quick-tools { margin-left: 24px; gap: 24px; }
.undo { display: flex; align-items: center; gap: 16px; }
.title-right { justify-content: flex-end; gap: 38px; }

.tabbar { height: 68px; padding: 0 20px 0 20px; display: flex; justify-content: space-between; align-items: flex-start; }
.tabs { display: flex; align-items: flex-start; gap: 48px; padding-top: 14px; color: #e3e3e3; font-size: 26px; font-weight: 600; }
.tabs button { display: flex; flex-direction: column; gap: 6px; line-height: 30px; }
.active { font-weight: 700; }
.active::after { content: ""; align-self: stretch; height: 6px; border-radius: 3px; background: #e3e3e3; }
.tabs .tellme { flex-direction: row; align-items: center; gap: 20px; margin-left: -10px; }
.actions { display: flex; gap: 20px; padding-top: 8px; }
.actions button { height: 48px; padding: 0 14px 0 18px; border-radius: 6px; background: #626262; display: flex; align-items: center; gap: 8px; font-size: 24px; font-weight: 600; color: #ececec; }

.ribbon { height: 140px; display: grid; grid-template-columns: 274px 300px 684px 654px 314px 464px 1fr; }
.group { display: flex; align-items: flex-start; background: linear-gradient(#4c4c4c, #4c4c4c) right top / 2px 124px no-repeat; }
.group:last-child { background: none; }
.dim { color: #8d8d8d; }
.big { width: 82px; padding-top: 6px; display: flex; flex-direction: column; align-items: center; line-height: 24px; font-weight: 500; }
.big.single { width: 64px; }
.big span { display: flex; align-items: center; gap: 12px; margin-bottom: 10px; }
.stack button { height: 44px; display: flex; align-items: center; gap: 10px; font-weight: 500; }
.stack .chev { margin-left: 4px; }
.stack.wide { padding-top: 2px; }
.stack.wide button { height: 64px; }
.clipboard { padding-left: 26px; gap: 16px; }
.slides { padding-left: 24px; gap: 20px; }
.insert { padding-left: 26px; gap: 17px; }
.drawing { padding-left: 26px; gap: 18px; }
.designer { padding-left: 27px; }
.para { padding-left: 17px; }
.para .rows { width: 515px; }
.rows { display: flex; flex-direction: column; }
.font { padding-left: 17px; }
.row { display: flex; align-items: center; height: 48px; margin-top: 10px; }
.font .row:first-child { padding-left: 2px; gap: 5px; }
.inset { padding-left: 10px; }
.row.second { height: 32px; margin-top: 24px; }
.combo { display: flex; align-items: center; height: 48px; padding: 0 8px 0 12px; border-radius: 6px; background: #333; border: 1px solid #3c3c3c; border-bottom: 2px solid #484848; color: #b4b4b4; }
.combo select { appearance: none; flex: 1; min-width: 0; border: 0; background: none; color: #9d9d9d; font: 500 23px Inter, sans-serif; }
.name { width: 343px; }
.size { width: 107px; }
.tools { display: flex; align-items: center; gap: 24px; margin-left: 9px; }
.tools.tight { gap: 18px; }
.inset .tools { margin-left: 0; }
.sep { width: 2px; height: 36px; background: #4c4c4c; }
.tight .sep { margin: 0 6px; }
.split { display: flex; align-items: center; gap: 14px; color: #8d8d8d; }
.cell { width: 52px; height: 32px; display: grid; place-items: center; color: #757575; font-size: 26px; line-height: 32px; }
.b { font-weight: 700; }
.i { font-family: "Liberation Serif", serif; font-style: italic; font-size: 29px; }
.u { text-decoration: underline; text-underline-offset: 5px; font-size: 24px; }
.s { text-decoration: line-through; font-size: 24px; }
.x { display: block; font-size: 25px; font-weight: 500; }
.x sup, .x sub { color: #2f6288; font-size: 14px; line-height: 0; }
.case { width: 32px; font-size: 25px; color: #757575; }

.body { flex: 1; display: flex; border-top: 2px solid #000; }
.sidebar {
  width: 456px; display: flex; align-items: flex-start; padding: 12px 0 0 20px; border-right: 2px solid #000;
  background: linear-gradient(#333, #333) right / 7px 100% no-repeat, radial-gradient(ellipse 560px 420px at 75% 0, #40464a, rgba(38,38,38,0) 100%), linear-gradient(#343b44, #262626 260px);
}
.num { width: 34px; font-size: 27px; line-height: 48px; color: #eee; }
.thumb { width: 360px; height: 208px; padding: 6px; border-radius: 14px; background: #e96e57; }
.thumb svg { width: 348px; height: 196px; background: #fff; border: 2px solid #c9c9c4; border-radius: 8px; }
.stage { flex: 1; display: flex; flex-direction: column; background: #282828; }
.canvas { flex: 1; display: flex; justify-content: center; align-items: center; padding: 44px; }
.slide { width: 87%; aspect-ratio: 2030 / 1143; background: #fff; box-shadow: 0 4px 40px #3a3a3a; }
.notes { height: 80px; padding: 16px 16px 16px 14px; border: 0; border-top: 3px solid #000; background: #282828; color: #fff; font: 26px/30px "Liberation Sans", Arial, sans-serif; resize: none; }
.notes::placeholder { color: #fff; opacity: 1; }

.status { height: 44px; padding-left: 46px; display: flex; align-items: center; gap: 40px; border-top: 2px solid #000; background: linear-gradient(#4a4b4b, #3a3a3a); font-size: 24px; color: #ececec; }
.status button { display: flex; align-items: center; gap: 8px; }
.right { margin-left: auto; display: flex; align-items: center; height: 100%; padding-right: 46px; }
.right .cm { margin: 0 20px 0 40px; }
.right .view { width: 72px; height: 100%; justify-content: center; }
.right .on { background: #5a5a5a; }
.minus, .plus { width: 16px; height: 16px; background: linear-gradient(#f2f2f2, #f2f2f2) center / 16px 4px no-repeat; }
.right .minus { margin: 0 14px 0 13px; }
.plus { background: linear-gradient(#f2f2f2, #f2f2f2) center / 16px 4px no-repeat, linear-gradient(#f2f2f2, #f2f2f2) center / 4px 16px no-repeat; }
.right .plus { margin-left: 14px; }
.right .pct { margin: 0 40px 0 34px; }
input[type="range"] { appearance: none; width: 200px; height: 9px; border-radius: 5px; background: #767676; }
input[type="range"]::-webkit-slider-thumb { appearance: none; width: 32px; height: 32px; border-radius: 50%; background: #a0a0a0; }
```
FILE: script.js
```js
// Mass spectrum trace: noise drawn between an upper and a lower envelope.
// Each row is [x, top, bottom] in slide units.
const envelope = [
  [1700, 1120, 1245], [1714, 1112, 1228], [1726, 1110, 1214], [1742, 1110, 1212], [1759, 1117, 1203],
  [1775, 1115, 1188], [1791, 1107, 1168], [1808, 1087, 1150], [1824, 1075, 1133], [1840, 1073, 1123],
  [1849, 1073, 1118], [1865, 1075, 1119], [1881, 1083, 1124], [1898, 1099, 1142], [1914, 1114, 1158],
  [1930, 1144, 1176], [1947, 1162, 1190], [1967, 1186, 1209], [1987, 1204, 1224], [2008, 1222, 1236],
  [2028, 1238, 1250], [2048, 1252, 1263], [2069, 1265, 1275], [2089, 1277, 1286], [2110, 1292, 1301], [2128, 1307, 1313]
];
const spikes = { 1705: 1052, 1711: 1071, 1717: 1049, 1724: 1101 };

let seed = 7;
const random = () => (seed = (seed * 16807) % 2147483647) / 2147483647;

function bounds(x) {
  let i = 1;
  while (i < envelope.length - 1 && envelope[i][0] < x) i++;
  const [x0, t0, b0] = envelope[i - 1];
  const [x1, t1, b1] = envelope[i];
  const k = (x - x0) / (x1 - x0);
  return [t0 + (t1 - t0) * k, b0 + (b1 - b0) * k];
}

const points = [];
let up = true;
for (let x = 1700; x <= 2128; x += 0.9) {
  const [top, bottom] = bounds(x);
  const height = bottom - top;
  const y = up ? top + height * 0.35 * random() : bottom - height * 0.4 * random();
  points.push(x.toFixed(1) + " " + y.toFixed(1));
  up = !up;
  for (const s in spikes) {
    if (Math.abs(x - s) < 0.45) points.push(s + " " + spikes[s]);
  }
}
document.getElementById("spectrum").setAttribute("d", "M" + points.join("L"));
```
